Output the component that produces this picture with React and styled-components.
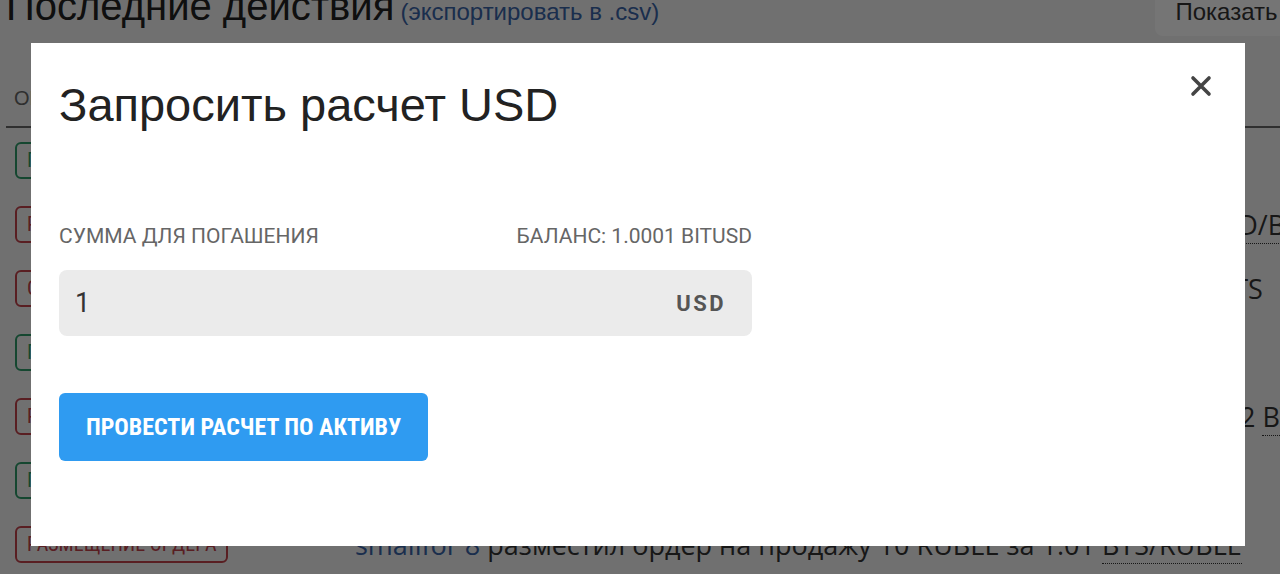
import React, { useState } from "react";
import styled, { createGlobalStyle } from "styled-components";

const GlobalStyle = createGlobalStyle`
  html, body {
    margin: 0;
    padding: 0;
    overflow: hidden;
  }
  body {
    font-family: "Liberation Sans", Arial, sans-serif;
    background: #f5f5f5;
  }
`;

const condensed = `"Roboto Condensed", "Liberation Sans Narrow", Roboto, sans-serif`;

/* ---------- page behind the dialog ---------- */

const Page = styled.div`
  height: 574px;
  overflow: hidden;
  background: #f5f5f5;
  padding: 0 0 0 6px;
`;

const PageHeader = styled.div`
  display: flex;
  align-items: flex-start;
  justify-content: space-between;
  margin-top: -18px;
  margin-right: -62px;
  height: 88px;
`;

const PageTitle = styled.h2`
  margin: 0;
  font-size: 40px;
  font-weight: 400;
  line-height: 48px;
  color: #222;
  white-space: nowrap;

  a {
    margin-left: -5px;
    font-size: 24px;
    color: #3a64a8;
    text-decoration: none;
  }
`;

const ShowButton = styled.div`
  background: #fff;
  border-radius: 8px;
  padding: 16px 20px 10px 20px;
  font-size: 24px;
  color: #333;
  white-space: nowrap;
`;

const TableHead = styled.div`
  display: flex;
  align-items: center;
  height: 56px;
  margin-right: -10px;
  border-bottom: 2px solid #666;
  padding-left: 8px;
  font-size: 20px;
  color: #666;
  text-transform: uppercase;
`;

const Row = styled.div`
  display: grid;
  grid-template-columns: 340px 1fr;
  align-items: center;
  height: 64px;
  padding-left: 9px;
`;

const Badge = styled.span`
  justify-self: start;
  border: 2px solid ${({ $tone }) => ($tone === "green" ? "#2f9b6a" : "#c2424a")};
  color: ${({ $tone }) => ($tone === "green" ? "#2f9b6a" : "#c2424a")};
  border-radius: 6px;
  padding: 6px 10px;
  font-family: ${condensed};
  font-size: 20px;
  line-height: 21px;
  text-transform: uppercase;
  white-space: nowrap;
`;

const RowText = styled.span`
  font-family: "Open Sans", sans-serif;
  font-size: 27px;
  color: #333;
  white-space: nowrap;

  b {
    font-weight: 400;
    border-bottom: 1px dotted #333;
  }
  a {
    color: #3a64a8;
  }
`;

/* ---------- dialog ---------- */

const Overlay = styled.div`
  position: fixed;
  inset: 0;
  background: rgba(0, 0, 0, 0.54);
  display: flex;
  justify-content: center;
  align-items: flex-start;
  padding-top: 43px;
`;

const Modal = styled.div`
  position: relative;
  box-sizing: border-box;
  width: 1214px;
  height: 503px;
  margin-left: -4px;
  background: #fff;
  padding: 38px 28px 0 28px;
`;

const CloseButton = styled.button`
  position: absolute;
  top: 32px;
  right: 33px;
  width: 22px;
  height: 22px;
  padding: 0;
  border: none;
  background: none;
  cursor: pointer;
  color: #444;
`;

const Title = styled.h3`
  margin: 0;
  font-size: 47px;
  line-height: 47px;
  font-weight: 400;
  color: #222;
`;

const Form = styled.div`
  width: 693px;
  margin-top: 97px;
`;

const LabelRow = styled.div`
  display: flex;
  justify-content: space-between;
  font-family: Roboto, sans-serif;
  font-size: 21px;
  line-height: 22px;
  color: #666;
  text-transform: uppercase;
`;

const InputBox = styled.div`
  display: flex;
  align-items: center;
  justify-content: space-between;
  height: 66px;
  margin-top: 23px;
  padding: 0 26px 0 16px;
  background: #ebebeb;
  border-radius: 8px;
`;

const AmountInput = styled.input`
  flex: 1;
  border: none;
  background: transparent;
  outline: none;
  font-family: Roboto, sans-serif;
  font-size: 27px;
  color: #333;
  padding: 0;
`;

const Unit = styled.span`
  font-family: Roboto, sans-serif;
  font-weight: 700;
  font-size: 22px;
  letter-spacing: 2.5px;
  color: #555;
`;

const Submit = styled.button`
  margin-top: 57px;
  width: 369px;
  height: 68px;
  border: none;
  border-radius: 6px;
  background: #2f9bf1;
  color: #fff;
  font-family: ${condensed};
  font-weight: 700;
  font-size: 24px;
  text-transform: uppercase;
  cursor: pointer;
`;

const rows = [
  { tone: "green", tag: "Перевод", text: <>smallfor 8 перевел 10 <b>USD/BTS</b></> },
  { tone: "red", tag: "Размещение ордера", text: <>smallfor 8 разместил ордер на продажу 100.000 USD за 12.10150 <b>USD/BTS</b></> },
  { tone: "red", tag: "Отмена ордера", text: <>smallfor 8 отменил ордер на продажу 10000 RUBLE по цене 0.950 BTS</> },
  { tone: "green", tag: "Перевод", text: <>smallfor 8 перевел 1 USD</> },
  { tone: "red", tag: "Размещение ордера", text: <>smallfor 8 разместил ордер на продажу 12000.05 RUBLE по цене 1.02 <b>BTS/RUBLE</b></> },
  { tone: "green", tag: "Перевод", text: <>smallfor 8 перевел 5 BTS</> },
  { tone: "red", tag: "Размещение ордера", text: <><a>smallfor 8</a> разместил ордер на продажу 10 RUBLE за 1.01 <b>BTS/RUBLE</b></> },
];

export default function App() {
  const [amount, setAmount] = useState("1");

  return (
    <>
      <GlobalStyle />
      <Page>
        <PageHeader>
          <PageTitle>
            Последние действия <a>(экспортировать в .csv)</a>
          </PageTitle>
          <ShowButton>Показать все</ShowButton>
        </PageHeader>
        <TableHead>Операция</TableHead>
        {rows.map((row, i) => (
          <Row key={i}>
            <Badge $tone={row.tone}>{row.tag}</Badge>
            <RowText>{row.text}</RowText>
          </Row>
        ))}
      </Page>

      <Overlay>
        <Modal>
          <CloseButton aria-label="Закрыть">
            <svg width="22" height="22" viewBox="0 0 22 22">
              <path d="M3 3 L19 19 M19 3 L3 19" stroke="currentColor" strokeWidth="3.6" strokeLinecap="round" />
            </svg>
          </CloseButton>
          <Title>Запросить расчет USD</Title>
          <Form>
            <LabelRow>
              <span>Сумма для погашения</span>
              <span>Баланс: 1.0001 bitUSD</span>
            </LabelRow>
            <InputBox>
              <AmountInput value={amount} onChange={(e) => setAmount(e.target.value)} />
              <Unit>USD</Unit>
            </InputBox>
            <Submit>Провести расчет по активу</Submit>
          </Form>
        </Modal>
      </Overlay>
    </>
  );
}
